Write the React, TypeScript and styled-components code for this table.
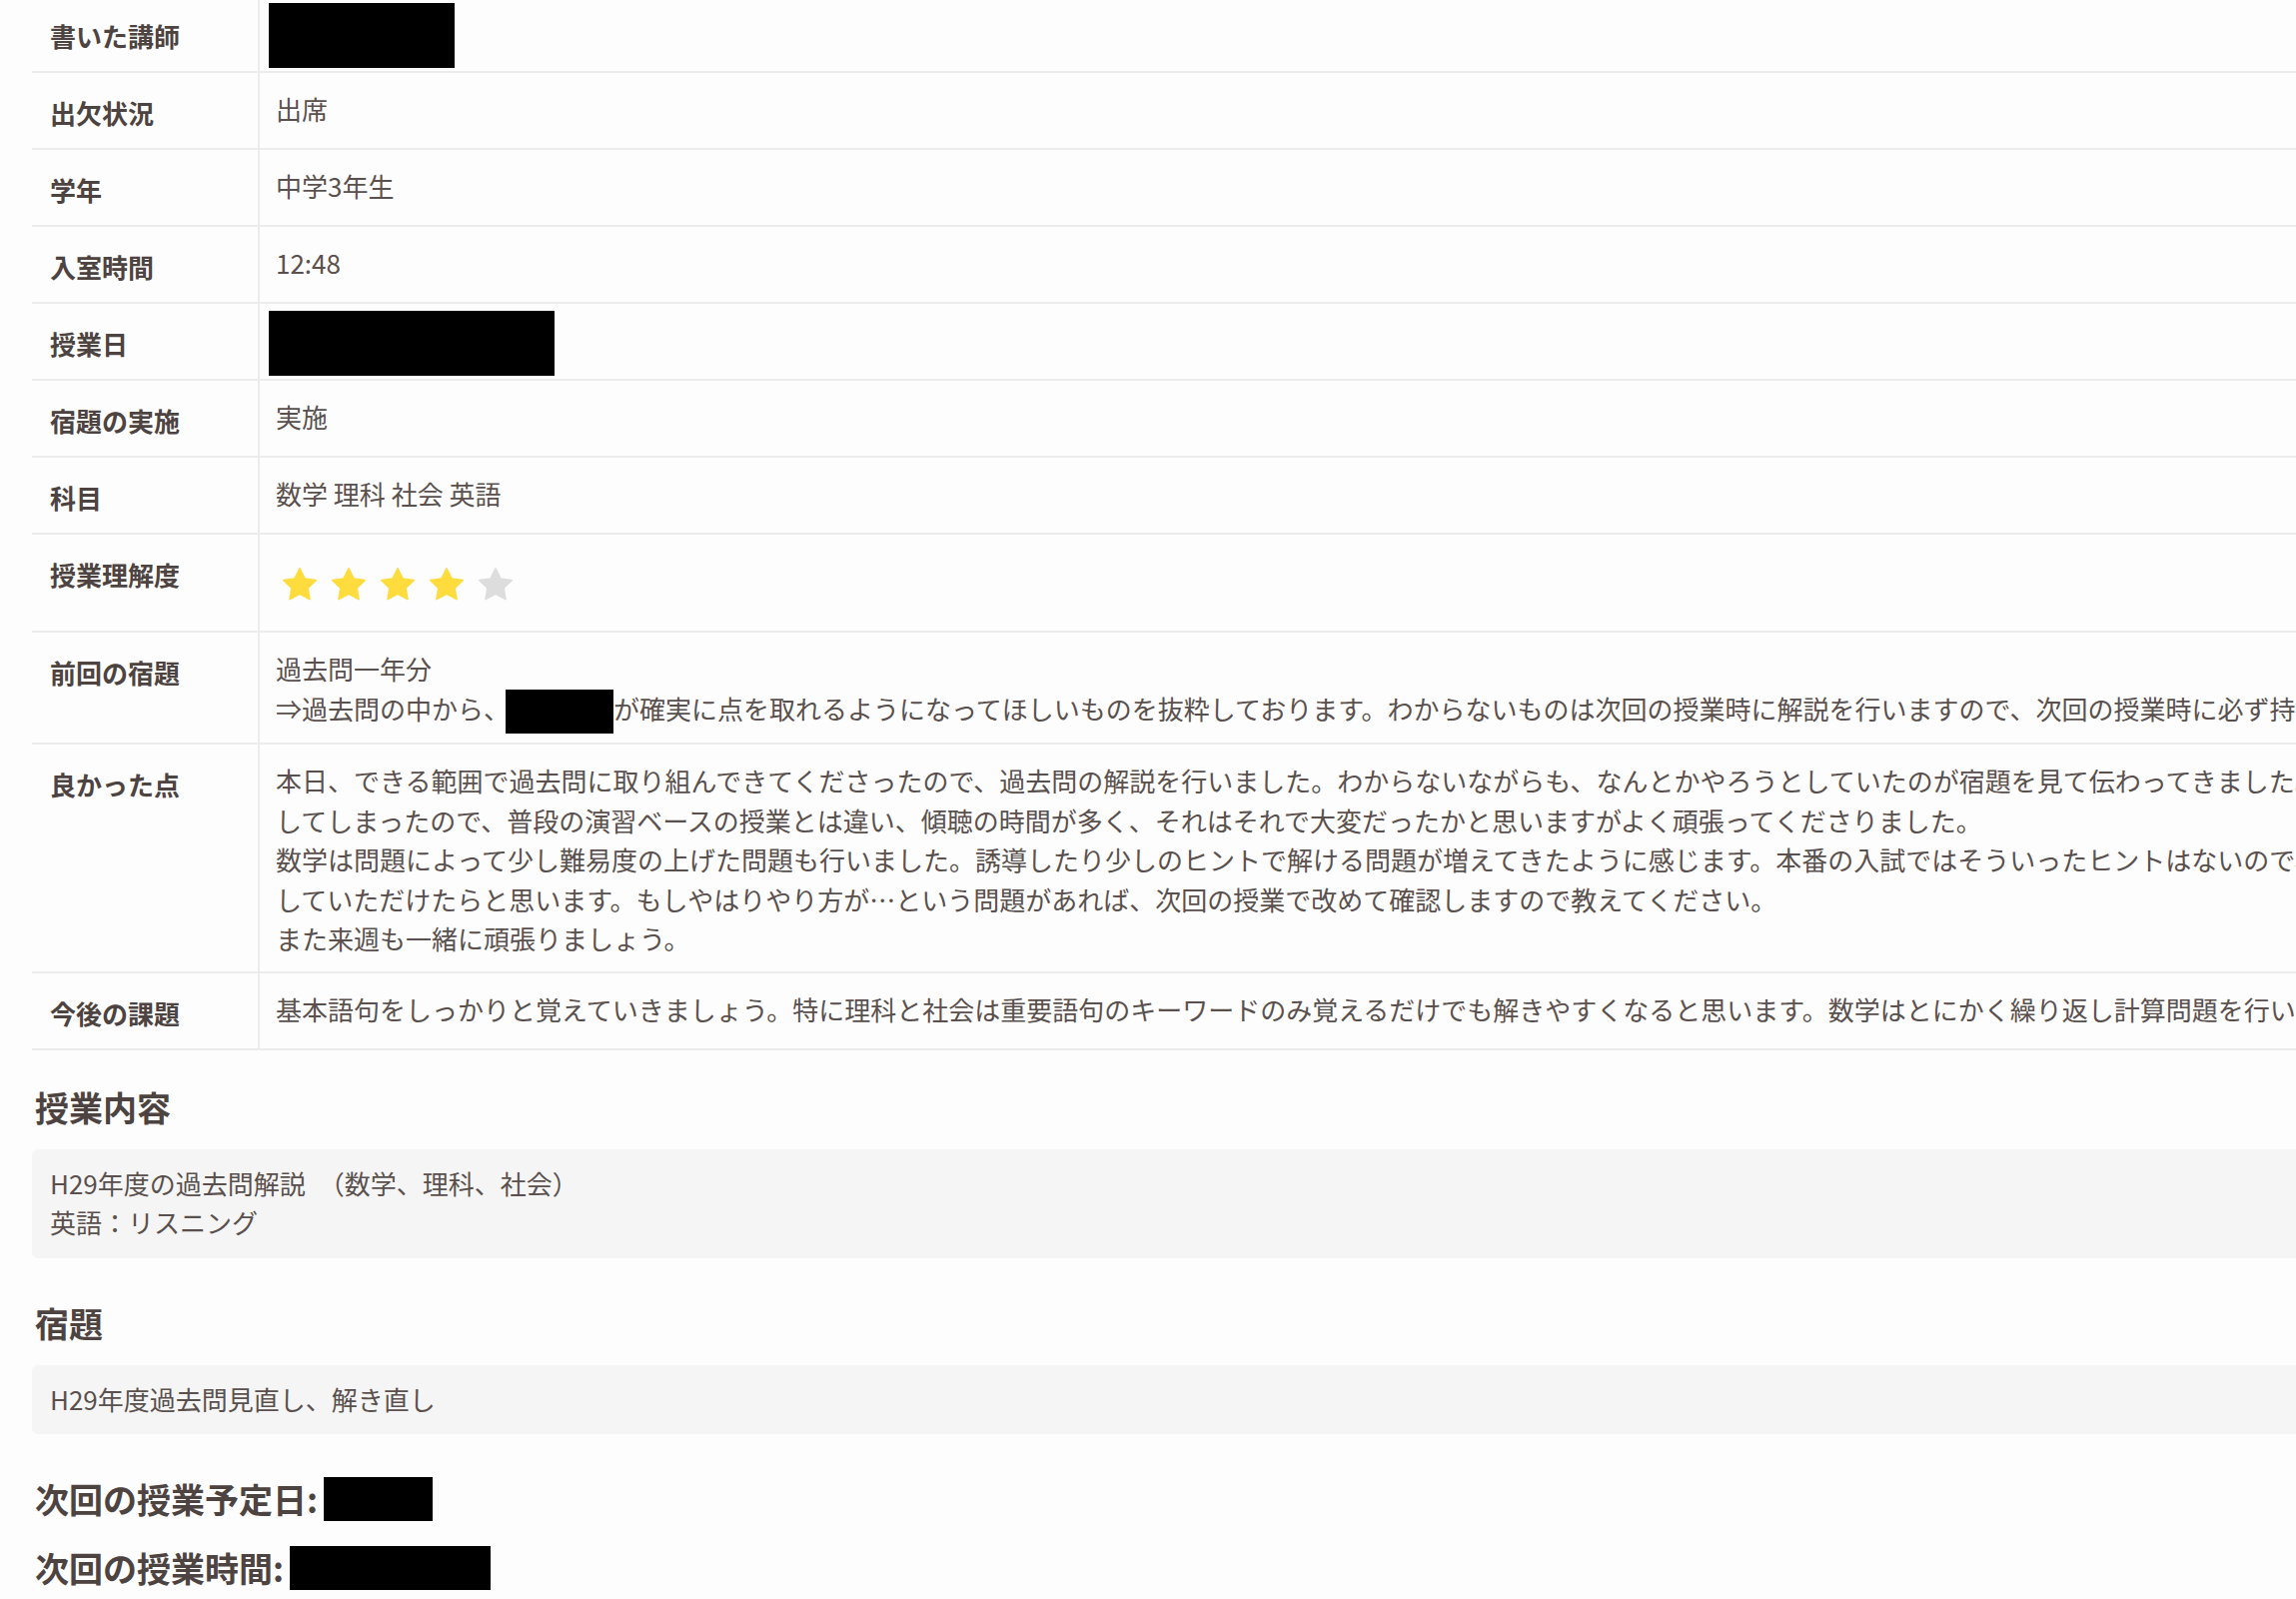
import React from "react";
import styled, { createGlobalStyle } from "styled-components";

const GlobalStyle = createGlobalStyle`
  html, body {
    margin: 0;
    padding: 0;
    background: #fdfdfd;
    overflow: hidden;
  }
  body {
    font-family: "Noto Sans CJK JP", "Noto Sans", sans-serif;
    color: #5a504d;
  }
`;

const Page = styled.div`
  width: 3200px;
  padding: 0 0 0 32px;
  box-sizing: border-box;
`;

const Table = styled.table`
  width: 100%;
  border-collapse: collapse;
  margin-top: -4px;
  margin-bottom: 32px;
`;

const Row = styled.tr`
  border-bottom: 2px solid #ececec;
`;

const Label = styled.th`
  width: 227px;
  box-sizing: border-box;
  padding: 20px 18px 16px;
  border-right: 2px solid #ececec;
  text-align: left;
  vertical-align: top;
  font-size: 26px;
  line-height: 39px;
  font-weight: 700;
  color: #4d4340;
  white-space: nowrap;
`;

const Value = styled.td<{ $tight?: boolean }>`
  padding: ${(p) => (p.$tight ? "7px 16px 3px 9px" : "16px 16px 13px 16px")};
  vertical-align: top;
  font-size: 26px;
  line-height: 39.5px;
  color: #5a504d;
  white-space: nowrap;
`;

const Redacted = styled.div<{ $w: number }>`
  width: ${(p) => p.$w}px;
  height: 65px;
  background: #000;
`;

const InlineRedacted = styled.span<{ $w: number }>`
  display: inline-block;
  width: ${(p) => p.$w}px;
  height: 44px;
  margin: -4px 0 -4px -4px;
  background: #000;
  vertical-align: middle;
`;

const Stars = styled.div`
  height: 67px;
  display: flex;
  align-items: center;
  gap: 15px;
  padding-left: 7px;
`;

const Heading = styled.h2<{ $gap?: number }>`
  margin: 0 0 ${(p) => p.$gap ?? 17}px;
  padding-left: 3px;
  font-size: 34px;
  line-height: 50px;
  font-weight: 700;
  color: #4d4340;
  display: flex;
  align-items: center;
  gap: 6px;
`;

const HeadingRedacted = styled.span<{ $w: number }>`
  display: inline-block;
  width: ${(p) => p.$w}px;
  height: 44px;
  background: #000;
`;

const Box = styled.div`
  background: #f5f5f5;
  border-radius: 6px;
  padding: 14px 18px 16px;
  margin-bottom: 40px;
  font-size: 26px;
  line-height: 39.5px;
  color: #5a504d;
  white-space: nowrap;
`;

const Star: React.FC<{ on: boolean }> = ({ on }) => {
  const c = on ? "#fedc3d" : "#dddddd";
  return (
    <svg width="34" height="33" viewBox="1.5 1.5 21 20.4" aria-hidden>
      <polygon
        points="12,2 15.09,8.26 22,9.27 17,14.14 18.18,21.02 12,17.77 5.82,21.02 7,14.14 2,9.27 8.91,8.26"
        fill={c}
        stroke={c}
        strokeWidth="1"
        strokeLinejoin="round"
      />
    </svg>
  );
};

export default function App() {
  const rating = 4;
  return (
    <Page>
      <GlobalStyle />
      <Table>
        <tbody>
          <Row>
            <Label>書いた講師</Label>
            <Value $tight>
              <Redacted $w={186} />
            </Value>
          </Row>
          <Row>
            <Label>出欠状況</Label>
            <Value>出席</Value>
          </Row>
          <Row>
            <Label>学年</Label>
            <Value>中学3年生</Value>
          </Row>
          <Row>
            <Label>入室時間</Label>
            <Value>12:48</Value>
          </Row>
          <Row>
            <Label>授業日</Label>
            <Value $tight>
              <Redacted $w={286} />
            </Value>
          </Row>
          <Row>
            <Label>宿題の実施</Label>
            <Value>実施</Value>
          </Row>
          <Row>
            <Label>科目</Label>
            <Value>数学 理科 社会 英語</Value>
          </Row>
          <Row>
            <Label>授業理解度</Label>
            <Value>
              <Stars>
                {[1, 2, 3, 4, 5].map((i) => (
                  <Star key={i} on={i <= rating} />
                ))}
              </Stars>
            </Value>
          </Row>
          <Row>
            <Label>前回の宿題</Label>
            <Value>
              過去問一年分
              <br />
              ⇒過去問の中から、
              <InlineRedacted $w={108} />
              が確実に点を取れるようになってほしいものを抜粋しております。わからないものは次回の授業時に解説を行いますので、次回の授業時に必ず持ってきてください。
            </Value>
          </Row>
          <Row>
            <Label>良かった点</Label>
            <Value>
              本日、できる範囲で過去問に取り組んできてくださったので、過去問の解説を行いました。わからないながらも、なんとかやろうとしていたのが宿題を見て伝わってきました。ただ、解説が中心の授業に
              <br />
              してしまったので、普段の演習ベースの授業とは違い、傾聴の時間が多く、それはそれで大変だったかと思いますがよく頑張ってくださりました。
              <br />
              数学は問題によって少し難易度の上げた問題も行いました。誘導したり少しのヒントで解ける問題が増えてきたように感じます。本番の入試ではそういったヒントはないので、自分の力で解けるように練習
              <br />
              していただけたらと思います。もしやはりやり方が…という問題があれば、次回の授業で改めて確認しますので教えてください。
              <br />
              また来週も一緒に頑張りましょう。
            </Value>
          </Row>
          <Row>
            <Label>今後の課題</Label>
            <Value>
              基本語句をしっかりと覚えていきましょう。特に理科と社会は重要語句のキーワードのみ覚えるだけでも解きやすくなると思います。数学はとにかく繰り返し計算問題を行い、ミスを減らしていきましょう。
            </Value>
          </Row>
        </tbody>
      </Table>

      <Heading>授業内容</Heading>
      <Box>
        H29年度の過去問解説　（数学、理科、社会）
        <br />
        英語：リスニング
      </Box>

      <Heading>宿題</Heading>
      <Box>H29年度過去問見直し、解き直し</Box>

      <Heading $gap={19}>
        次回の授業予定日:
        <HeadingRedacted $w={109} />
      </Heading>
      <Heading>
        次回の授業時間:
        <HeadingRedacted $w={201} />
      </Heading>
    </Page>
  );
}
